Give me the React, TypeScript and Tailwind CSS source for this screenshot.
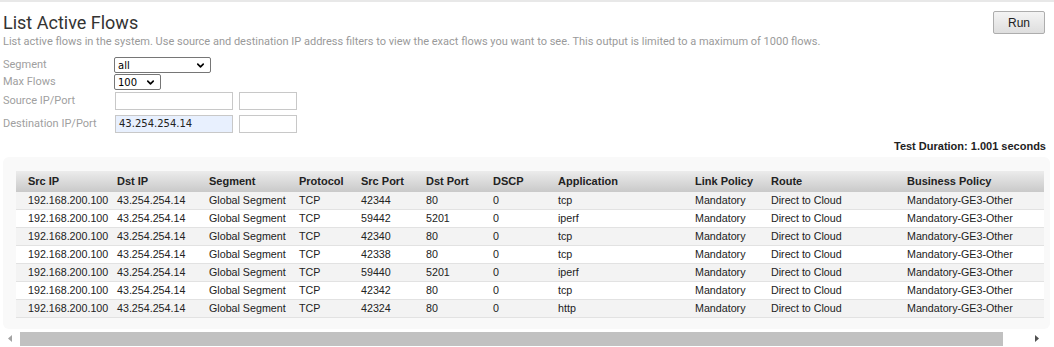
import { ChevronDown } from 'lucide-react';

const columns = [
  { label: 'Src IP', w: 'w-[89px]' },
  { label: 'Dst IP', w: 'w-[92px]' },
  { label: 'Segment', w: 'w-[90px]' },
  { label: 'Protocol', w: 'w-[62px]' },
  { label: 'Src Port', w: 'w-[65px]' },
  { label: 'Dst Port', w: 'w-[67px]' },
  { label: 'DSCP', w: 'w-[65px]' },
  { label: 'Application', w: 'w-[137px]' },
  { label: 'Link Policy', w: 'w-[76px]' },
  { label: 'Route', w: 'w-[136px]' },
  { label: 'Business Policy', w: 'w-[137px]' },
];

const flows = [
  ['42344', '80', 'tcp'],
  ['59442', '5201', 'iperf'],
  ['42340', '80', 'tcp'],
  ['42338', '80', 'tcp'],
  ['59440', '5201', 'iperf'],
  ['42342', '80', 'tcp'],
  ['42324', '80', 'http'],
];

const App = () => {
  return (
    <div className="w-[1054px] h-[347px] overflow-hidden bg-white border-t-2 border-[#e8e8e8] font-['Roboto',sans-serif]">
      {/* title + run */}
      <div className="flex justify-between pl-[3px] pr-[9px] pt-[9px]">
        <div>
          <h1 className="text-[18px] leading-[22px] text-[#333] mt-[1px]">List Active Flows</h1>
          <p className="text-[11px] leading-[16px] text-[#9a9a9a]">
            List active flows in the system. Use source and destination IP address filters to view the exact flows you want to see. This output is limited to a maximum of 1000 flows.
          </p>
        </div>
        <button className="w-[52px] h-[23px] border border-[#adadad] rounded-[2px] bg-gradient-to-b from-[#f4f4f4] to-[#dedede] text-[12px] text-[#222] font-['Liberation_Sans',Arial,sans-serif]">
          Run
        </button>
      </div>

      {/* filters */}
      <div className="grid grid-cols-[111px_auto] pl-[3px] mt-[7px] text-[11px] items-center">
        <span className="text-[#a0a0a0] leading-[16px]">Segment</span>
        <div className="flex">
          <div className="w-[97px] h-[16px] border border-[#767676] rounded-[2px] flex items-center justify-between pl-[3px] pr-[4px] font-['DejaVu_Sans',sans-serif] text-[10px] text-black">
            <span>all</span>
            <ChevronDown size={11} strokeWidth={3.5} />
          </div>
        </div>
        <span className="text-[#a0a0a0] leading-[16px] mt-[1px]">Max Flows</span>
        <div className="flex mt-[1px]">
          <div className="w-[47px] h-[16px] border border-[#767676] rounded-[2px] flex items-center justify-between pl-[3px] pr-[4px] font-['DejaVu_Sans',sans-serif] text-[10px] text-black">
            <span>100</span>
            <ChevronDown size={11} strokeWidth={3.5} />
          </div>
        </div>
        <span className="text-[#a0a0a0] leading-[18px] mt-[2px]">Source IP/Port</span>
        <div className="flex gap-[6px] mt-[2px] pl-[1px]">
          <div className="w-[118px] h-[18px] border border-[#c8c8c8]" />
          <div className="w-[58px] h-[18px] border border-[#c8c8c8]" />
        </div>
        <span className="text-[#a0a0a0] leading-[18px] mt-[5px]">Destination IP/Port</span>
        <div className="flex gap-[6px] mt-[5px] pl-[1px]">
          <div className="w-[118px] h-[18px] border border-[#c8c8c8] bg-[#e8f0fe] pl-[3px] leading-[16px] text-[11px] text-[#222] font-['DejaVu_Sans',sans-serif]">
            <span className="text-[10px]">43.254.254.14</span>
          </div>
          <div className="w-[58px] h-[18px] border border-[#c8c8c8]" />
        </div>
      </div>

      {/* duration */}
      <div className="text-right pr-[8px] mt-[6px] text-[11px] font-bold leading-[14px] text-[#222] font-['Liberation_Sans',Arial,sans-serif]">
        Test Duration: 1.001 seconds
      </div>

      {/* table */}
      <div className="ml-[3px] mr-[4px] mt-[4px] h-[172px] bg-[#f9f9f9] rounded-[6px] pt-[14px] pl-[13px] font-['Liberation_Sans',Arial,sans-serif] text-[10.7px] text-[#222]">
        <div className="flex h-[21px] items-center bg-gradient-to-b from-[#ececec] to-[#c9c9c9] font-bold w-[1028px] text-[11px]">
          {columns.map((c, i) => (
            <div key={i} className={`${c.w} shrink-0 first:pl-[12px] first:w-[101px]`}>
              {c.label}
            </div>
          ))}
        </div>
        {flows.map((f, r) => {
          const cells = ['192.168.200.100', '43.254.254.14', 'Global Segment', 'TCP', f[0], f[1], '0', f[2], 'Mandatory', 'Direct to Cloud', 'Mandatory-GE3-Other'];
          return (
            <div key={r} className={`flex h-[18px] items-center border-b border-[#e2e2e2] w-[1028px] ${r % 2 === 0 ? 'bg-[#f3f3f3]' : 'bg-white'}`}>
              {cells.map((v, i) => (
                <div key={i} className={`${columns[i].w} shrink-0 first:pl-[12px] first:w-[101px]`}>
                  {v}
                </div>
              ))}
            </div>
          );
        })}
      </div>

      {/* horizontal scrollbar */}
      <div className="flex items-center h-[15px] mt-[2px] bg-white">
        <div className="w-[20px] flex justify-center">
          <svg width="4" height="7" viewBox="0 0 4 7"><path d="M4 0 L0 3.5 L4 7 Z" fill="#a3a3a3" /></svg>
        </div>
        <div className="flex-1 h-[14px]">
          <div className="h-full bg-[#c1c1c1]" />
        </div>
        <div className="w-[51px] flex justify-end pr-[15px]">
          <svg width="4" height="7" viewBox="0 0 4 7"><path d="M0 0 L4 3.5 L0 7 Z" fill="#505050" /></svg>
        </div>
      </div>
    </div>
  );
};

export default App;
